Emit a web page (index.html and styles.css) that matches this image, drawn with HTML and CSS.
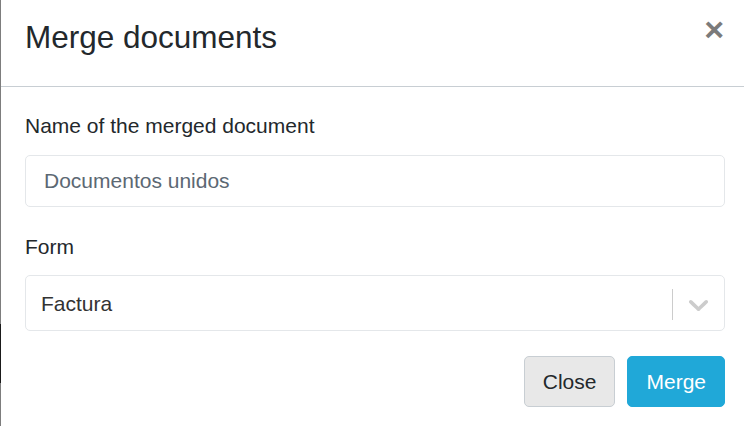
FILE: index.html
```html
<!DOCTYPE html>
<html>
<head>
<meta charset="utf-8">
<link rel="stylesheet" href="styles.css">
</head>
<body>
<div class="modal">
  <div class="modal-header">
    <h5 class="modal-title">Merge documents</h5>
    <button class="close" type="button">×</button>
  </div>
  <div class="modal-body">
    <div class="group">
      <label class="label">Name of the merged document</label>
      <input class="input" type="text" value="Documentos unidos">
    </div>
    <div class="group group-form">
      <label class="label">Form</label>
      <div class="select">
        <span class="select-value">Factura</span>
        <span class="indicators">
          <span class="sep"></span>
          <svg class="chevron" viewBox="0 0 20 20" width="33" height="33" aria-hidden="true"><path fill="#cccccc" d="M4.516 7.548c0.436-0.446 1.043-0.481 1.576 0l3.908 3.747 3.908-3.747c0.533-0.481 1.141-0.446 1.574 0 0.436 0.445 0.408 1.197 0 1.615-0.406 0.418-4.695 4.502-4.695 4.502-0.217 0.223-0.502 0.335-0.787 0.335s-0.57-0.112-0.789-0.335c0 0-4.287-4.084-4.695-4.502s-0.436-1.170 0-1.615z"/></svg>
        </span>
      </div>
    </div>
    <div class="footer">
      <button class="btn btn-secondary" type="button">Close</button>
      <button class="btn btn-primary" type="button">Merge</button>
    </div>
  </div>
</div>
</body>
</html>
```

FILE: styles.css
```css
* { box-sizing: border-box; }
html, body { margin: 0; padding: 0; background: #fff; }
body {
  font-family: "Liberation Sans", Arial, sans-serif;
  color: #23282c;
  width: 744px;
  height: 426px;
  overflow: hidden;
}
.modal {
  width: 744px;
  height: 426px;
  border-style: solid;
  border-width: 0 0 0 1px;
  border-image: linear-gradient(to bottom, #7d7d7d 0, #7d7d7d 323px, #1a1a1a 323px, #1a1a1a 382px, #7d7d7d 382px) 1;
}
.modal-header {
  display: flex;
  justify-content: space-between;
  align-items: flex-start;
  padding: 19px 19px 30px 24px;
  border-bottom: 1px solid #c8ced3;
}
.modal-title {
  margin: 0;
  font-size: 31.5px;
  font-weight: 400;
  line-height: 37px;
  color: #23282c;
}
.close {
  border: 0;
  background: transparent;
  padding: 0;
  margin: -7px 1px 0 0;
  font-family: "Liberation Sans", Arial, sans-serif;
  font-size: 34px;
  font-weight: 700;
  line-height: 1;
  color: #7b7b7b;
}
.modal-body {
  padding: 23px 19px 0 24px;
}
.group { display: flex; flex-direction: column; }
.group-form { margin-top: 24px; }
.label {
  font-size: 21px;
  line-height: 31px;
  margin-bottom: 14px;
}
.group-form .label { margin-bottom: 13px; }
.input {
  height: 52px;
  width: 100%;
  border: 1px solid #e4e7ea;
  border-radius: 5px;
  padding: 0 18px;
  font-family: "Liberation Sans", Arial, sans-serif;
  font-size: 21px;
  color: #5c6873;
  background: #fff;
  outline: none;
}
.select {
  height: 56px;
  border: 1px solid #e4e7ea;
  border-radius: 5px;
  display: flex;
  align-items: center;
  justify-content: space-between;
  padding: 2px 9px 0 15px;
}
.select-value {
  font-size: 21px;
  color: #333;
}
.indicators {
  display: flex;
  align-items: center;
}
.sep {
  width: 1px;
  height: 31px;
  background: #cccccc;
  margin-right: 9px;
}
.chevron { display: block; }
.footer {
  display: flex;
  justify-content: flex-end;
  gap: 12px;
  margin-top: 25px;
}
.btn {
  height: 51px;
  padding: 0 18px;
  border: 1px solid transparent;
  border-radius: 5px;
  font-family: "Liberation Sans", Arial, sans-serif;
  font-size: 21px;
  line-height: 1;
}
.btn-secondary {
  background: #e8e8e8;
  border-color: #c8ced3;
  color: #23282c;
}
.btn-primary {
  background: #20a8d8;
  border-color: #20a8d8;
  color: #fff;
}
```
